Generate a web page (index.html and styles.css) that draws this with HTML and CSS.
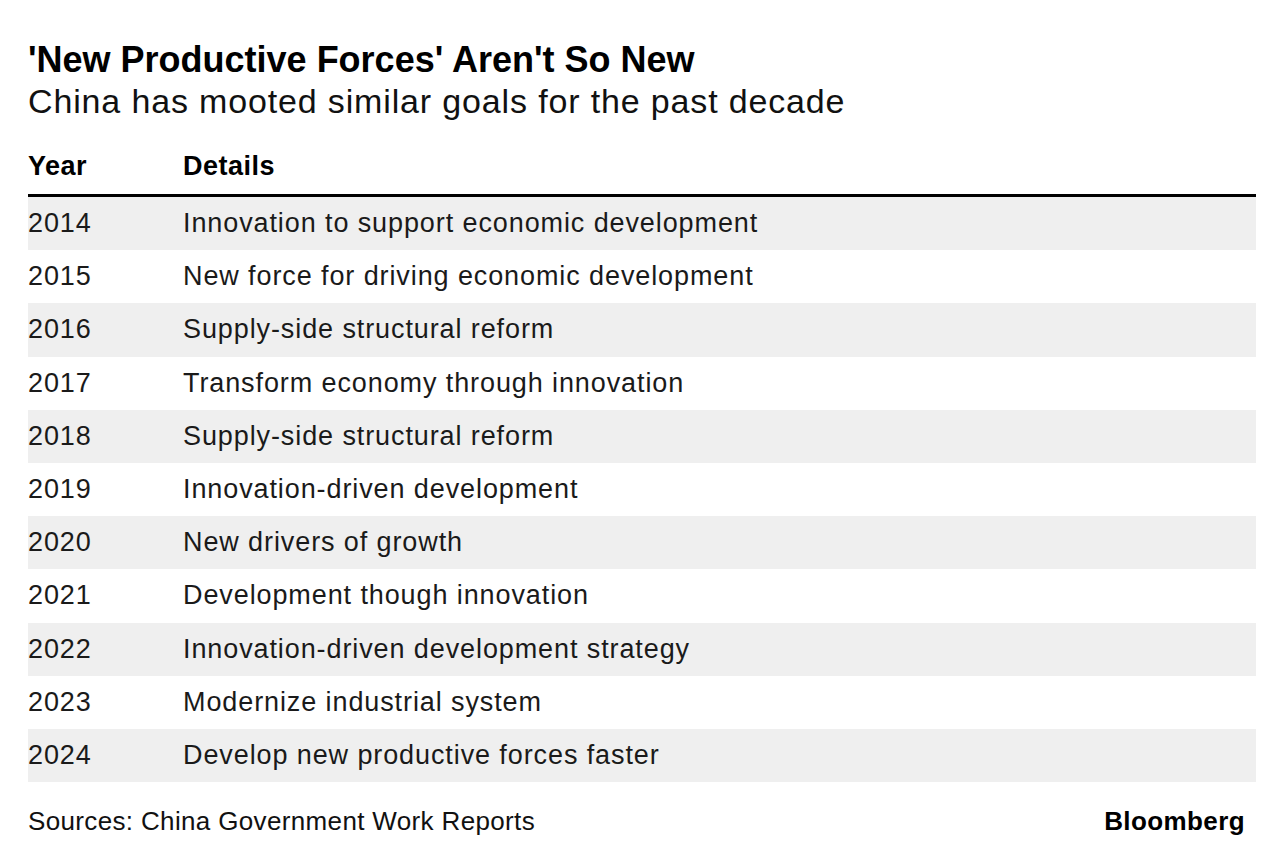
FILE: index.html
```html
<!DOCTYPE html>
<html lang="en">
<head>
<meta charset="utf-8">
<title>'New Productive Forces' Aren't So New</title>
<link rel="stylesheet" href="styles.css">
</head>
<body>
<main class="chart">
  <h1 class="title">'New Productive Forces' Aren't So New</h1>
  <p class="subtitle">China has mooted similar goals for the past decade</p>
  <table class="table">
    <thead>
      <tr><th class="col-year">Year</th><th>Details</th></tr>
    </thead>
    <tbody>
      <tr><td class="col-year">2014</td><td>Innovation to support economic development</td></tr>
      <tr><td class="col-year">2015</td><td>New force for driving economic development</td></tr>
      <tr><td class="col-year">2016</td><td>Supply-side structural reform</td></tr>
      <tr><td class="col-year">2017</td><td>Transform economy through innovation</td></tr>
      <tr><td class="col-year">2018</td><td>Supply-side structural reform</td></tr>
      <tr><td class="col-year">2019</td><td>Innovation-driven development</td></tr>
      <tr><td class="col-year">2020</td><td>New drivers of growth</td></tr>
      <tr><td class="col-year">2021</td><td>Development though innovation</td></tr>
      <tr><td class="col-year">2022</td><td>Innovation-driven development strategy</td></tr>
      <tr><td class="col-year">2023</td><td>Modernize industrial system</td></tr>
      <tr><td class="col-year">2024</td><td>Develop new productive forces faster</td></tr>
    </tbody>
  </table>
  <footer class="footer">
    <span class="source">Sources: China Government Work Reports</span>
    <span class="logo">Bloomberg</span>
  </footer>
</main>
</body>
</html>
```

FILE: styles.css
```css
html, body {
  margin: 0;
  padding: 0;
  background: #ffffff;
}

body {
  font-family: "Liberation Sans", Arial, sans-serif;
  color: #111111;
}

.chart {
  padding: 39px 28px 0 28px;
}

.title {
  margin: 0;
  font-size: 36px;
  line-height: 42px;
  font-weight: 700;
  letter-spacing: 0;
  color: #000000;
}

.subtitle {
  margin: 0;
  font-size: 34px;
  line-height: 40px;
  font-weight: 400;
  letter-spacing: 0.85px;
  color: #111111;
}

.table {
  width: 100%;
  border-collapse: collapse;
  margin-top: 29px;
}

.table th {
  text-align: left;
  font-size: 27px;
  line-height: 32px;
  font-weight: 700;
  padding: 0 0 12px 0;
  border-bottom: 3px solid #000000;
  letter-spacing: 0.5px;
  color: #000000;
}

.table td {
  font-size: 27px;
  line-height: 53.2px;
  padding: 0;
  letter-spacing: 0.9px;
  color: #1a1a1a;
  white-space: nowrap;
}

.table .col-year {
  width: 155px;
}

.table tbody tr:nth-child(odd) {
  background: #efefef;
}

.footer {
  display: flex;
  justify-content: space-between;
  align-items: baseline;
  margin-top: 24px;
  padding-right: 11px;
}

.source {
  font-size: 26px;
  line-height: 30px;
  color: #111111;
  letter-spacing: 0.35px;
}

.logo {
  font-size: 26px;
  line-height: 30px;
  font-weight: 700;
  color: #000000;
  letter-spacing: 0.4px;
}
```
